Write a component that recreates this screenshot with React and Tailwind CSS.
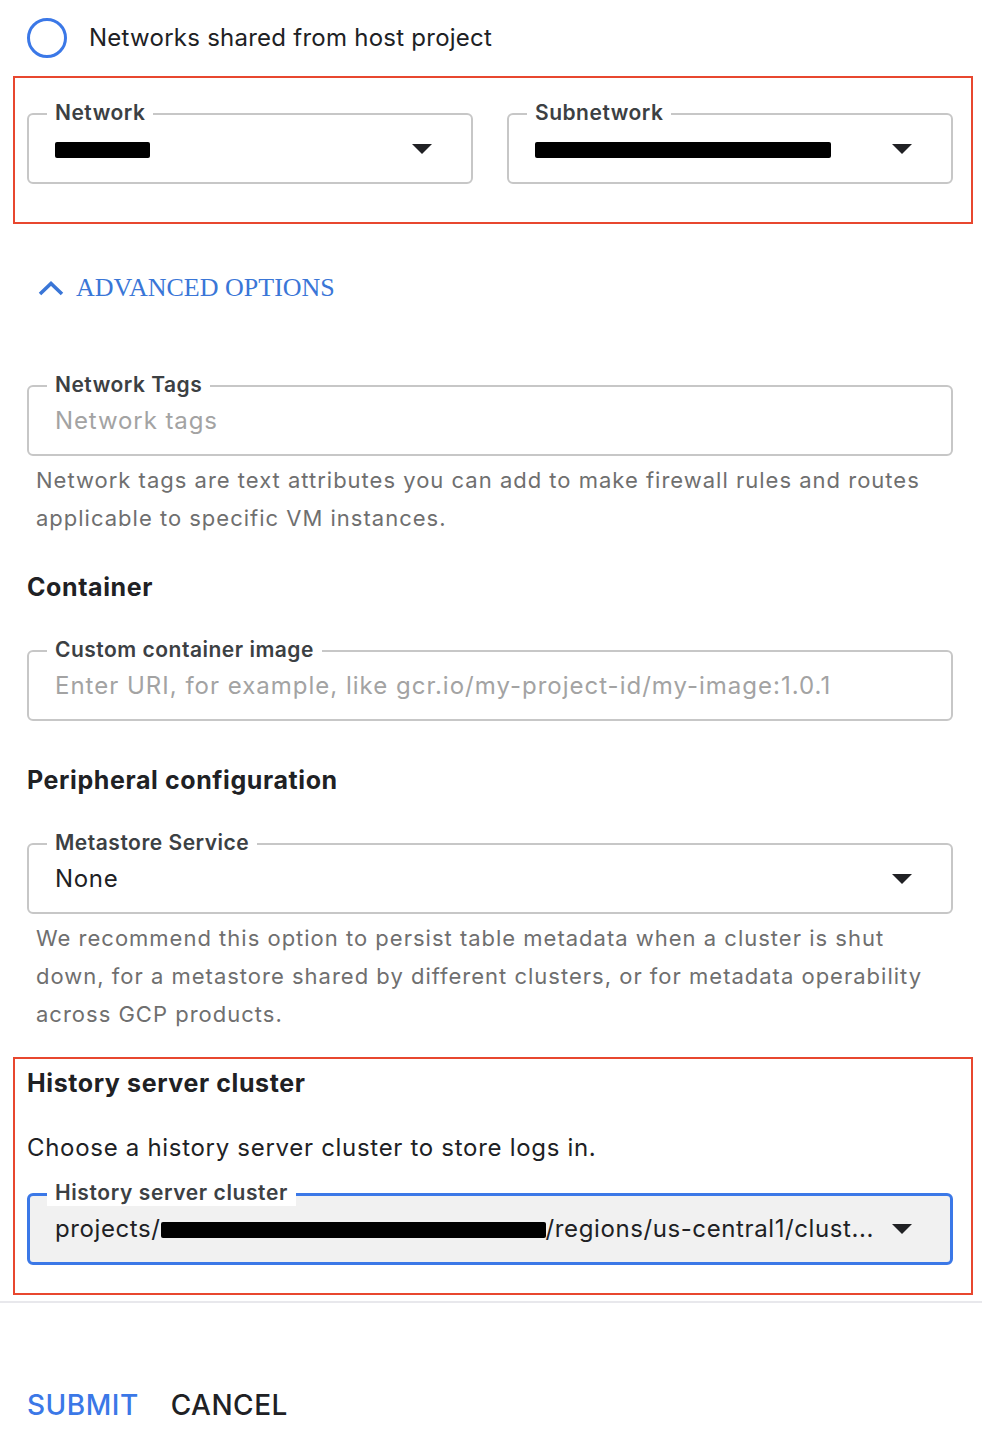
const font = { fontFamily: "Inter, 'Noto Sans', sans-serif" };

function Caret() {
  return (
    <svg width="20" height="10" viewBox="0 0 20 10" className="shrink-0">
      <polygon points="0,0 20,0 10,10" fill="#202124" />
    </svg>
  );
}

function Redacted({ w }) {
  return <span className={`inline-block h-[16px] bg-black align-middle rounded-[2px] ${w}`} />;
}

function Field({ label, children, caret, className = "" }) {
  return (
    <div className={`relative flex h-[71px] items-center rounded-[6px] border-2 border-[#c7c7c7] pl-[26px] pr-[39px] ${className}`}>
      <span className="absolute left-[18px] top-[-15px] bg-white px-[8px] text-[21px] font-semibold leading-[26px] tracking-[0.5px] text-[#3c4043]">
        {label}
      </span>
      <div className="flex-1 min-w-0">{children}</div>
      {caret && <Caret />}
    </div>
  );
}

function Helper({ children }) {
  return (
    <p className="mt-[5px] pl-[9px] text-[22px] leading-[38px] tracking-[1px] text-[#6f6f6f]">
      {children}
    </p>
  );
}

export default function App() {
  return (
    <div className="w-[982px] bg-white pb-[30px] text-[#202124]" style={font}>
      <div className="pl-[27px] pr-[29px]">
        {/* radio row */}
        <div className="flex h-[76px] items-center gap-[22px]">
          <span className="block h-[40px] w-[40px] rounded-full border-[3.5px] border-[#3b78e7]" />
          <span className="text-[24px] leading-[30px] tracking-[0.25px]">Networks shared from host project</span>
        </div>

        {/* network / subnetwork */}
        <div className="-ml-[14px] -mr-[20px] border-2 border-[#e8472f] pb-[38px] pl-[12px] pr-[18px] pt-[35px]">
          <div className="grid grid-cols-2 gap-[34px]">
            <Field label="Network" caret>
              <Redacted w="w-[95px]" />
            </Field>
            <Field label="Subnetwork" caret>
              <Redacted w="w-[296px]" />
            </Field>
          </div>
        </div>

        {/* advanced options */}
        <button className="mt-[47px] flex items-center gap-[12px] pl-[11px] text-[#3a76d7]">
          <svg width="26" height="16" viewBox="0 0 26 16" className="shrink-0">
            <polyline points="2,14 13,3.5 24,14" fill="none" stroke="currentColor" strokeWidth="3.6" />
          </svg>
          <span className="text-[26px] leading-[34px]" style={{ fontFamily: "'Liberation Serif', serif" }}>
            ADVANCED OPTIONS
          </span>
        </button>

        <div className="mt-[80px]">
          <Field label="Network Tags">
            <span className="text-[24px] tracking-[0.9px] text-[#a3a3a3]">Network tags</span>
          </Field>
          <Helper>
            Network tags are text attributes you can add to make firewall rules and routes applicable to specific VM instances.
          </Helper>
        </div>

        <h2 className="mt-[33px] text-[25px] font-bold leading-[34px] tracking-[0.6px]">Container</h2>
        <div className="mt-[46px]">
          <Field label="Custom container image">
            <span className="text-[24px] tracking-[1px] text-[#a3a3a3]">Enter URI, for example, like gcr.io/my-project-id/my-image:1.0.1</span>
          </Field>
        </div>

        <h2 className="mt-[42px] text-[25px] font-bold leading-[34px] tracking-[0.6px]">Peripheral configuration</h2>
        <div className="mt-[46px]">
          <Field label="Metastore Service" caret>
            <span className="text-[24px] tracking-[0.7px]">None</span>
          </Field>
          <Helper>
            We recommend this option to persist table metadata when a cluster is shut down, for a metastore shared by different clusters, or for metadata operability across GCP products.
          </Helper>
        </div>

        {/* history server */}
        <div className="-ml-[14px] -mr-[20px] mt-[24px] border-2 border-[#e8472f] pb-[28px] pl-[12px] pr-[18px] pt-[7px]">
          <h2 className="text-[25px] font-bold leading-[34px] tracking-[0.6px]">History server cluster</h2>
          <p className="mt-[31px] text-[24px] leading-[34px] tracking-[0.7px]">Choose a history server cluster to store logs in.</p>
          <div className="relative mt-[28px] flex h-[72px] items-center rounded-[6px] border-[3px] border-[#3b78e7] bg-[#f1f1f1] pl-[25px] pr-[38px]">
            <span className="absolute left-[17px] top-[-16px] bg-white px-[8px] text-[21px] font-semibold leading-[26px] tracking-[0.6px] text-[#3c4043]">
              History server cluster
            </span>
            <span className="flex-1 min-w-0 truncate text-[24px] leading-[30px] tracking-[0.6px]">
              projects/<Redacted w="w-[385px]" />/regions/us-central1/clust...
            </span>
            <Caret />
          </div>
        </div>
      </div>

      <div className="mt-[6px] h-[2px] bg-[#e8e8ec]" />

      <div className="mt-[81px] flex items-center gap-[32px] px-[27px]">
        <button className="text-[28px] font-medium tracking-[0.5px] text-[#3b78e7]">SUBMIT</button>
        <button className="text-[28px] font-medium tracking-[0.5px] text-[#202124]">CANCEL</button>
      </div>
    </div>
  );
}
